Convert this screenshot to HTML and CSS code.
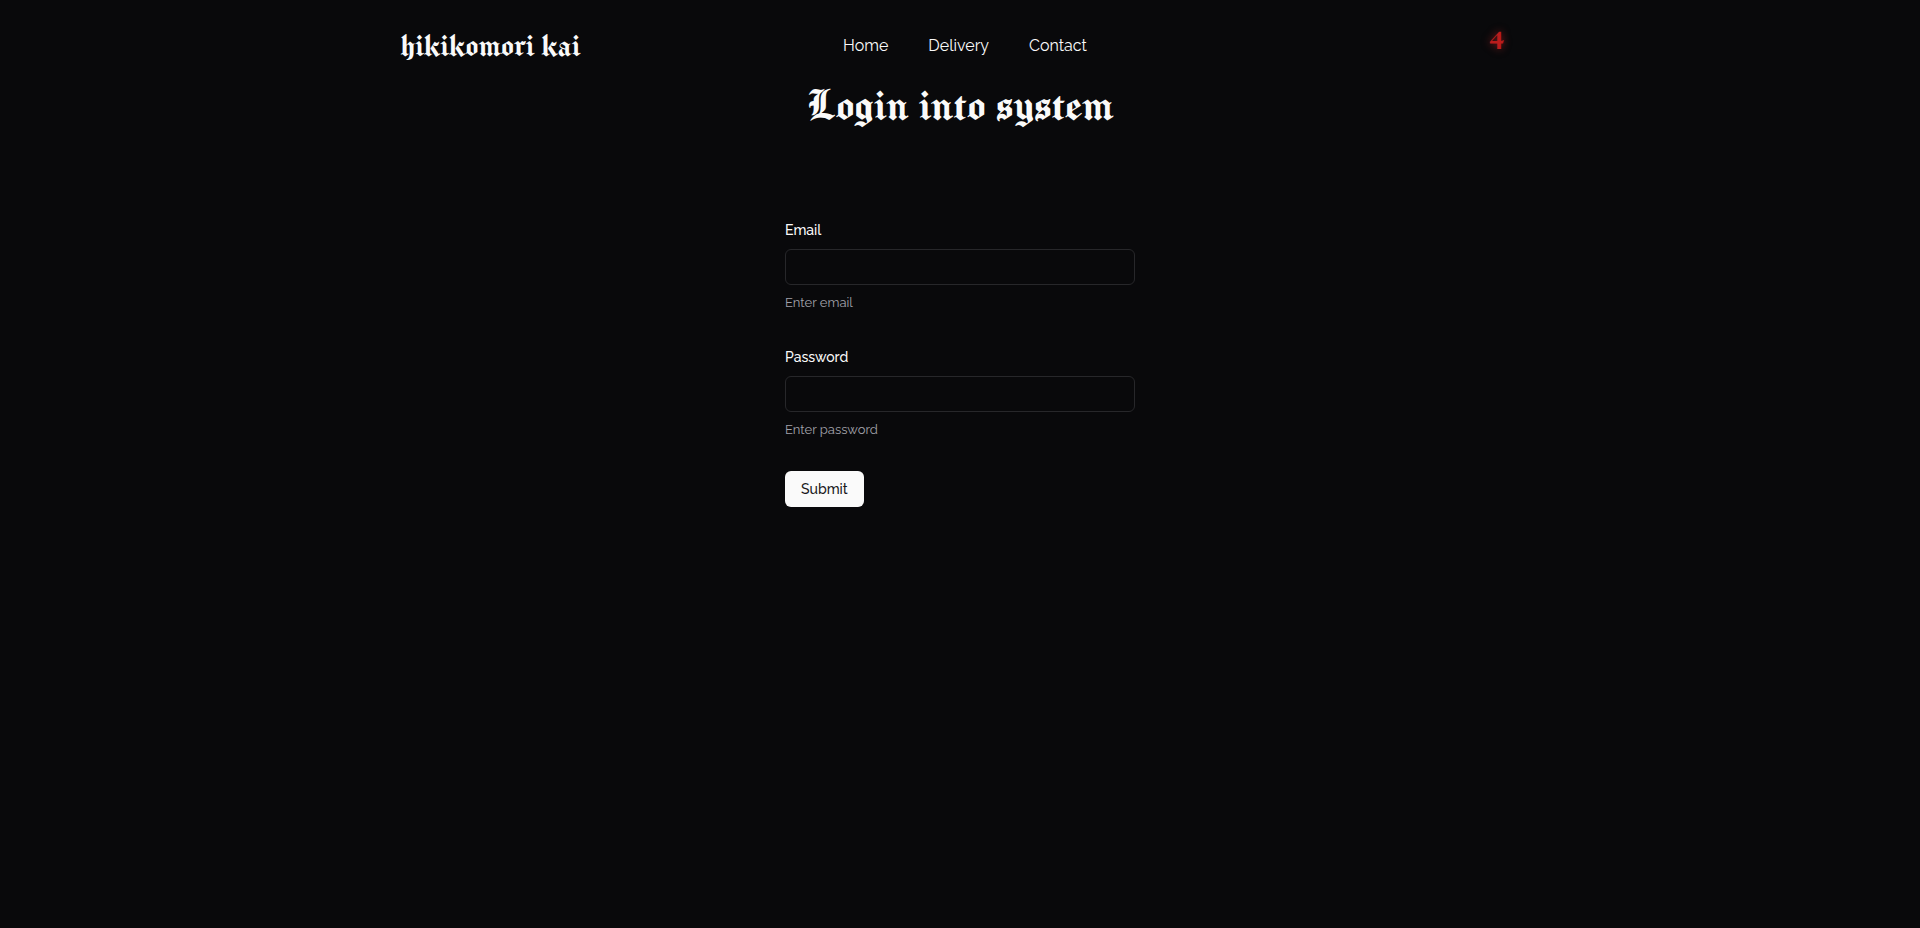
FILE: index.html
```html
<!DOCTYPE html>
<html lang="en">
<head>
<meta charset="utf-8">
<meta name="viewport" content="width=device-width, initial-scale=1">
<title>hikikomori kai</title>
<link rel="stylesheet" href="styles.css">
</head>
<body>
<header class="header">
  <a class="logo" href="#">hikikomori kai</a>
  <nav class="nav">
    <a href="#">Home</a>
    <a href="#">Delivery</a>
    <a href="#">Contact</a>
  </nav>
  <a class="count" href="#">4</a>
</header>
<main class="main">
  <h1 class="title">Login into system</h1>
  <form class="form">
    <div class="field">
      <label for="email">Email</label>
      <input id="email" type="email" aria-describedby="email-hint">
      <p class="hint" id="email-hint">Enter email</p>
    </div>
    <div class="field">
      <label for="password">Password</label>
      <input id="password" type="password" aria-describedby="password-hint">
      <p class="hint" id="password-hint">Enter password</p>
    </div>
    <button class="submit" type="submit">Submit</button>
  </form>
</main>
</body>
</html>
```
FILE: styles.css
```css
* {
  box-sizing: border-box;
  margin: 0;
}

body {
  background: #09090b;
  color: #fafafa;
  font-family: Raleway, Lato, sans-serif;
  font-size: 16px;
  line-height: 24px;
}

a {
  color: inherit;
  text-decoration: none;
}

.header {
  display: grid;
  grid-template-columns: 1fr auto 1fr;
  align-items: center;
  max-width: 1120px;
  margin: 0 auto;
  padding-top: 24px;
}

.logo,
.title,
.count {
  font-family: "Manufacturing Consent", "Old English Text MT", "Liberation Serif", serif;
  font-weight: 400;
}

.logo {
  font-size: 34px;
  line-height: 44px;
}

.nav {
  display: flex;
  gap: 40px;
  margin-left: 10px;
}

.count {
  justify-self: end;
  align-self: start;
  padding-right: 16px;
  color: #b91c1c;
  font-size: 28px;
  line-height: 32px;
  text-shadow: 0 0 8px #7f1d1d;
}

.main {
  display: flex;
  flex-direction: column;
  align-items: center;
  gap: 87px;
  padding: 12px 16px;
}

.title {
  font-size: 48px;
  line-height: 50px;
  text-align: center;
}

.form {
  display: flex;
  flex-direction: column;
  align-items: flex-start;
  gap: 32px;
  width: 100%;
  max-width: 350px;
}

.field {
  display: flex;
  flex-direction: column;
  gap: 8px;
  width: 100%;
  font-size: 14px;
}

.field label {
  padding-top: 2px;
  font-weight: 500;
  line-height: 22px;
}

.field input {
  width: 100%;
  height: 36px;
  padding: 4px 12px;
  border: 1px solid #27272a;
  border-radius: 6px;
  background: transparent;
  color: inherit;
  font: inherit;
}

.hint {
  color: #a1a1aa;
  font-size: 13px;
  line-height: 19px;
}

.submit {
  height: 36px;
  padding: 0 16px;
  border: 0;
  border-radius: 6px;
  background: #fafafa;
  color: #18181b;
  font: inherit;
  font-size: 14px;
  font-weight: 500;
}
```
